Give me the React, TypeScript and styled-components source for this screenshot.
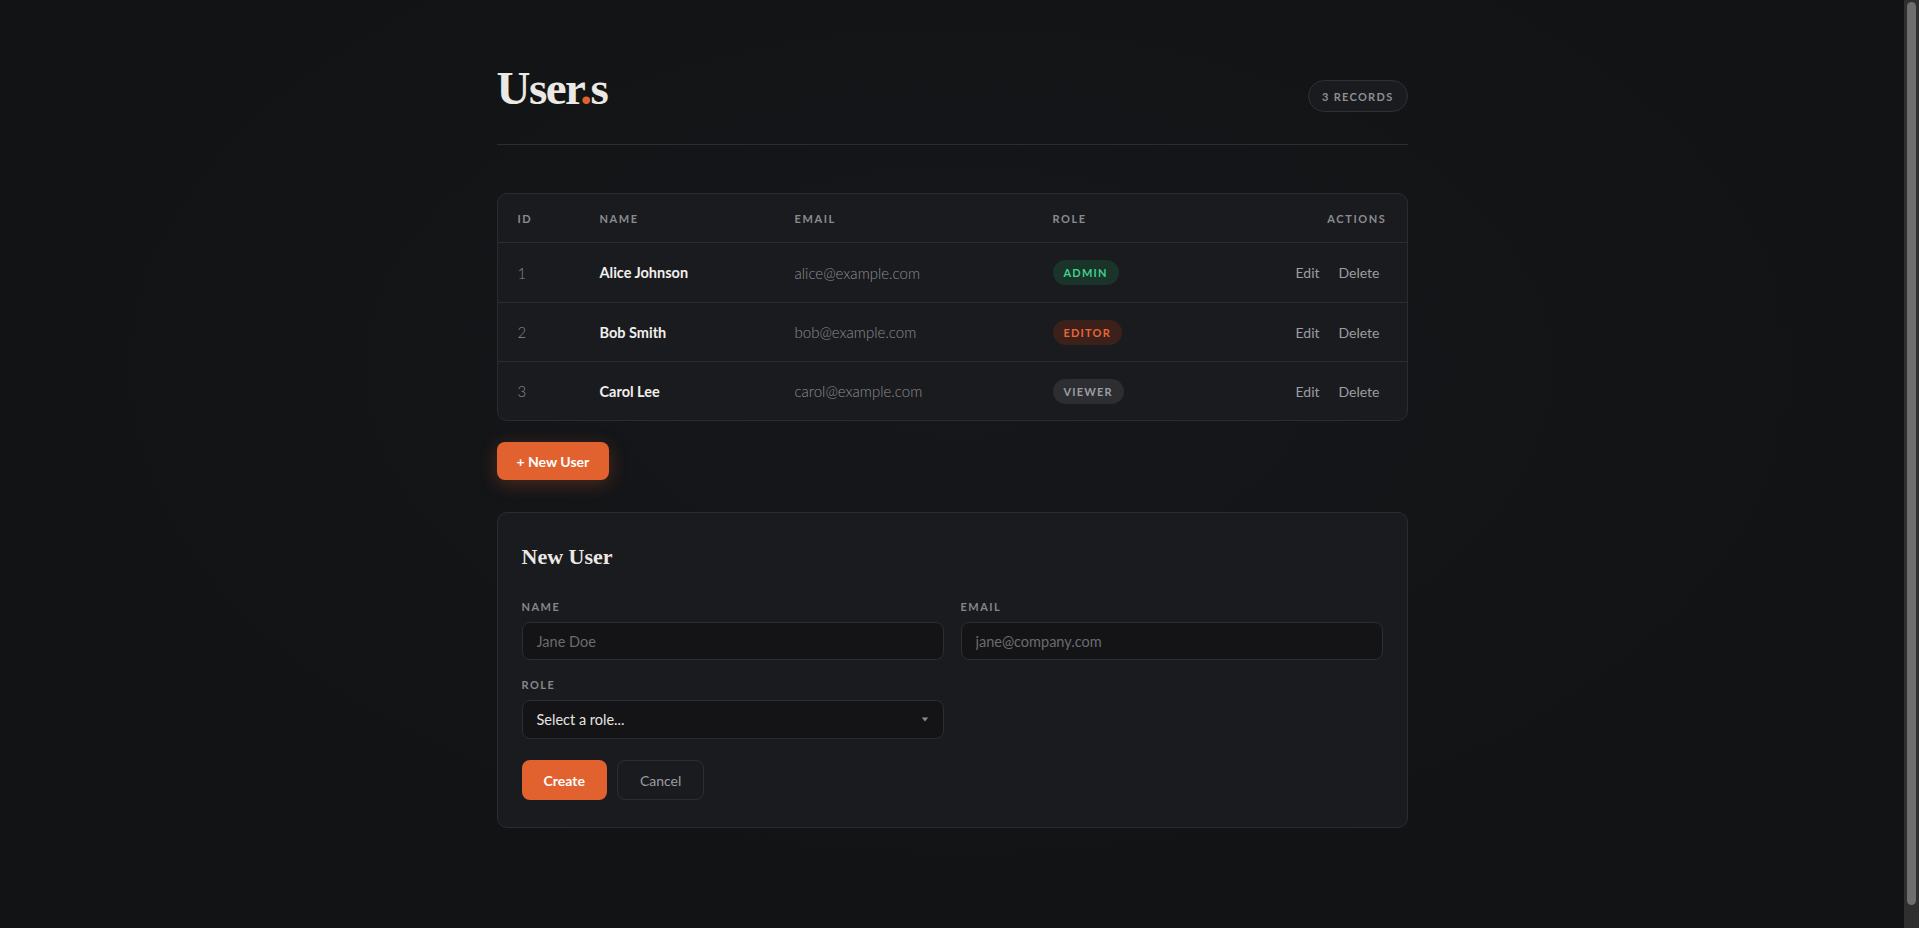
import styled, { createGlobalStyle } from "styled-components";

const GlobalStyle = createGlobalStyle`
  html, body {
    margin: 0;
    padding: 0;
    background: #131416;
  }
  body {
    font-family: "Lato", "Noto Sans", sans-serif;
    color: #e8e6e3;
  }
  * { box-sizing: border-box; }
`;

type Role = "admin" | "editor" | "viewer";

interface User {
  id: number;
  name: string;
  email: string;
  role: Role;
}

const users: User[] = [
  { id: 1, name: "Alice Johnson", email: "alice@example.com", role: "admin" },
  { id: 2, name: "Bob Smith", email: "bob@example.com", role: "editor" },
  { id: 3, name: "Carol Lee", email: "carol@example.com", role: "viewer" },
];

const roleColors: Record<Role, { bg: string; fg: string }> = {
  admin: { bg: "#1a3429", fg: "#3fcf8e" },
  editor: { bg: "#3b2119", fg: "#e8653b" },
  viewer: { bg: "#2d2e32", fg: "#9c9da2" },
};

export default function App() {
  return (
    <>
      <GlobalStyle />
      <Page>
        <Container>
          <Header>
            <Title>
              User<Dot>.</Dot>s
            </Title>
            <CountPill>3 RECORDS</CountPill>
          </Header>

          <TableCard>
            <HeadRow>
              <HeadCell>ID</HeadCell>
              <HeadCell>NAME</HeadCell>
              <HeadCell>EMAIL</HeadCell>
              <HeadCell>ROLE</HeadCell>
              <HeadCell $right>ACTIONS</HeadCell>
            </HeadRow>
            {users.map((u) => (
              <Row key={u.id}>
                <IdCell>{u.id}</IdCell>
                <NameCell>{u.name}</NameCell>
                <EmailCell>{u.email}</EmailCell>
                <div>
                  <Badge $role={u.role}>{u.role.toUpperCase()}</Badge>
                </div>
                <Actions>
                  <LinkButton>Edit</LinkButton>
                  <LinkButton>Delete</LinkButton>
                </Actions>
              </Row>
            ))}
          </TableCard>

          <PrimaryButton $glow>+ New User</PrimaryButton>

          <FormCard>
            <FormTitle>New User</FormTitle>
            <FieldGrid>
              <Field>
                <Label>NAME</Label>
                <Input placeholder="Jane Doe" />
              </Field>
              <Field>
                <Label>EMAIL</Label>
                <Input placeholder="jane@company.com" />
              </Field>
              <Field>
                <Label>ROLE</Label>
                <SelectBox>
                  <span>Select a role...</span>
                  <Caret viewBox="0 0 10 6">
                    <path d="M1 0.5h8L5 5.5z" fill="#8a8b90" />
                  </Caret>
                </SelectBox>
              </Field>
            </FieldGrid>
            <FormActions>
              <PrimaryButton $wide>Create</PrimaryButton>
              <GhostButton>Cancel</GhostButton>
            </FormActions>
          </FormCard>
        </Container>
      </Page>
      <ScrollTrack>
        <ScrollThumb />
      </ScrollTrack>
    </>
  );
}

const Page = styled.div`
  min-height: 100vh;
  padding: 64px 39px 100px 24px;
  background: radial-gradient(ellipse at 50% 40%, #16171a 0%, #121315 70%);
`;

const ScrollTrack = styled.div`
  position: fixed;
  top: 0;
  right: 0;
  bottom: 0;
  width: 15px;
  background: #2f2f30;
  padding: 2px 3px 23px;
`;

const ScrollThumb = styled.div`
  height: 100%;
  border-radius: 5px;
  background: #6e6e6f;
`;

const Container = styled.div`
  max-width: 911px;
  margin: 0 auto;
  display: flex;
  flex-direction: column;
  align-items: stretch;
`;

const Header = styled.header`
  display: flex;
  justify-content: space-between;
  align-items: flex-end;
  padding-bottom: 32px;
  border-bottom: 1px solid #2c2d30;
  margin-bottom: 48px;
`;

const Title = styled.h1`
  margin: 0;
  font-family: "Liberation Serif", "DejaVu Serif", serif;
  font-weight: 700;
  font-size: 47px;
  line-height: 48px;
  letter-spacing: -1.5px;
  color: #ece9e4;
`;

const Dot = styled.span`
  color: #e2622f;
`;

const CountPill = styled.span`
  display: inline-flex;
  align-items: center;
  height: 32px;
  padding: 0 13px;
  border: 1px solid #2f3034;
  border-radius: 16px;
  background: #1a1b1e;
  font-size: 11px;
  font-weight: 700;
  letter-spacing: 1.3px;
  color: #8d8e93;
`;

const TableCard = styled.div`
  border: 1px solid #2b2c30;
  border-radius: 10px;
  background: #1a1b1e;
  overflow: hidden;
`;

const columns = "82px 195px 258px 1fr auto";

const HeadRow = styled.div`
  display: grid;
  grid-template-columns: ${columns};
  align-items: center;
  height: 49px;
  padding: 0 20px;
  border-bottom: 1px solid #2b2c30;
`;

const HeadCell = styled.div<{ $right?: boolean }>`
  font-size: 11px;
  font-weight: 700;
  letter-spacing: 1.6px;
  color: #8a8b90;
  text-align: ${(p) => (p.$right ? "right" : "left")};
`;

const Row = styled.div`
  display: grid;
  grid-template-columns: ${columns};
  align-items: center;
  height: 59px;
  padding: 0 20px;
  & + & {
    border-top: 1px solid #2b2c30;
  }
`;

const IdCell = styled.div`
  font-size: 15px;
  font-weight: 300;
  color: #85868b;
`;

const NameCell = styled.div`
  font-size: 14.5px;
  font-weight: 700;
  color: #f1efec;
`;

const EmailCell = styled.div`
  font-size: 15px;
  font-weight: 300;
  color: #8c8d92;
`;

const Badge = styled.span<{ $role: Role }>`
  display: inline-flex;
  align-items: center;
  height: 25px;
  padding: 0 11px;
  border-radius: 13px;
  background: ${(p) => roleColors[p.$role].bg};
  color: ${(p) => roleColors[p.$role].fg};
  font-size: 11px;
  font-weight: 700;
  letter-spacing: 1.2px;
`;

const Actions = styled.div`
  display: flex;
  justify-content: flex-end;
  gap: 5px;
`;

const LinkButton = styled.button`
  border: none;
  background: none;
  padding: 4px 7px;
  font-family: inherit;
  font-size: 14px;
  color: #9c9da2;
  cursor: pointer;
`;

const PrimaryButton = styled.button<{ $glow?: boolean; $wide?: boolean }>`
  align-self: flex-start;
  height: ${(p) => (p.$wide ? "40px" : "38px")};
  margin-top: ${(p) => (p.$glow ? "21px" : "0")};
  padding: 0 ${(p) => (p.$wide ? "22px" : "20px")};
  border: none;
  border-radius: 8px;
  background: #e2622f;
  color: #fff;
  font-family: inherit;
  font-size: 14px;
  font-weight: 700;
  cursor: pointer;
  box-shadow: ${(p) =>
    p.$glow ? "0 4px 18px rgba(226, 98, 47, 0.28)" : "none"};
`;

const GhostButton = styled.button`
  height: 40px;
  padding: 0 22px;
  border: 1px solid #2d2e32;
  border-radius: 8px;
  background: transparent;
  color: #9c9da2;
  font-family: inherit;
  font-size: 14px;
  cursor: pointer;
`;

const FormCard = styled.section`
  margin-top: 32px;
  border: 1px solid #2b2c30;
  border-radius: 10px;
  background: #1a1b1e;
  padding: 28px 24px 27px;
`;

const FormTitle = styled.h2`
  margin: 0 0 28px;
  font-family: "Liberation Serif", "DejaVu Serif", serif;
  font-weight: 700;
  font-size: 22px;
  line-height: 31px;
  color: #ece9e4;
`;

const FieldGrid = styled.div`
  display: grid;
  grid-template-columns: 1fr 1fr;
  column-gap: 17px;
  row-gap: 18px;
`;

const Field = styled.div`
  display: flex;
  flex-direction: column;
  gap: 8px;
`;

const Label = styled.label`
  font-size: 11px;
  line-height: 14px;
  font-weight: 700;
  letter-spacing: 1.5px;
  color: #85868b;
`;

const Input = styled.input`
  height: 38px;
  padding: 0 14px;
  border: 1px solid #2c2d31;
  border-radius: 8px;
  background: #141416;
  color: #e8e6e3;
  font-family: inherit;
  font-size: 14.5px;
  outline: none;
  &::placeholder {
    color: #6a6b70;
  }
`;

const SelectBox = styled.div`
  display: flex;
  align-items: center;
  justify-content: space-between;
  height: 39px;
  padding: 0 14px;
  border: 1px solid #2c2d31;
  border-radius: 8px;
  background: #141416;
  color: #e6e4e1;
  font-size: 14.5px;
`;

const Caret = styled.svg`
  width: 8px;
  height: 5px;
`;

const FormActions = styled.div`
  display: flex;
  gap: 10px;
  margin-top: 21px;
`;
